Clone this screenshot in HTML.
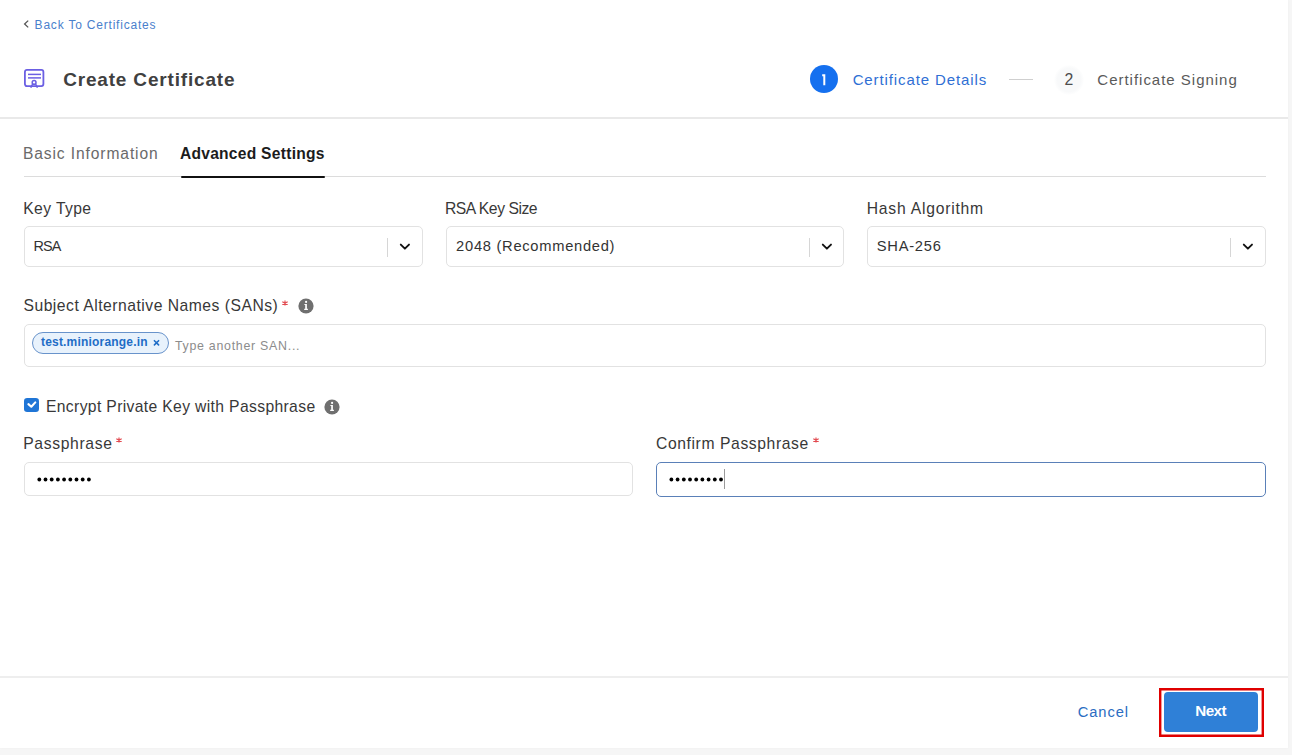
<!DOCTYPE html>
<html><head><meta charset="utf-8">
<style>
html,body{margin:0;padding:0;}
body{width:1292px;height:755px;overflow:hidden;background:#f6f6f6;position:relative;font-family:"Liberation Sans",sans-serif;}
.card{position:absolute;left:0;top:0;width:1288px;height:748px;background:#fff;box-shadow:0 0 3px rgba(0,0,0,0.035);}
.t{position:absolute;white-space:nowrap;line-height:1;}
.hr{position:absolute;height:1px;background:#e3e3e3;}
.box{position:absolute;box-sizing:border-box;border:1px solid #e2e2e2;border-radius:5px;background:#fff;}
.sep{position:absolute;width:1px;background:#d6d6d6;}
.chev{position:absolute;}
.info{position:absolute;width:15px;height:15px;border-radius:50%;background:#6e6e6e;}
.req{color:#e5484d;}
</style></head>
<body>
<div class="card">
  <!-- back link -->
  <svg class="chev" style="left:22px;top:19px" width="8" height="11" viewBox="0 0 8 11"><polyline points="6.2,1.6 2.6,5 6.2,8.4" fill="none" stroke="#555" stroke-width="1.3"/></svg>
  <div id="back" class="t" style="left:34.60px;top:19px;font-size:12px;letter-spacing:0.799px;color:#4a80cc;">Back To Certificates</div>

  <!-- header -->
  <svg style="position:absolute;left:23px;top:68px" width="23" height="23" viewBox="0 0 23 23">
    <rect x="1.9" y="1.9" width="18.5" height="16.2" rx="2" fill="none" stroke="#6b5fe3" stroke-width="1.8"/>
    <line x1="5" y1="6.4" x2="18" y2="6.4" stroke="#6b5fe3" stroke-width="1.5"/>
    <line x1="5" y1="9.9" x2="18" y2="9.9" stroke="#6b5fe3" stroke-width="1.5"/>
    <circle cx="11.1" cy="14.4" r="1.9" fill="none" stroke="#6b5fe3" stroke-width="1.5"/>
    <path d="M9.6 16 L7.8 19.8 M12.6 16 L14.4 19.8" fill="none" stroke="#6b5fe3" stroke-width="1.5"/>
  </svg>
  <div id="title" class="t" style="left:63.15px;top:70px;font-size:19px;font-weight:700;letter-spacing:0.825px;color:#404040;">Create Certificate</div>

  <!-- stepper -->
  <div style="position:absolute;left:810px;top:65px;width:28px;height:28px;border-radius:50%;background:#1570ef;"></div>
  <svg style="position:absolute;left:818px;top:72px" width="10" height="16" viewBox="0 0 10 16"><path d="M4.2 3.2 L6.3 3.2 L6.3 13.3" fill="none" stroke="#fff" stroke-width="2" stroke-linejoin="miter"/></svg>
  <div id="s1t" class="t" style="left:852.65px;top:72px;font-size:15px;letter-spacing:0.892px;color:#2f6fd4;">Certificate Details</div>
  <div class="hr" style="left:1009px;top:79px;width:24px;background:#cfcfcf;"></div>
  <div style="position:absolute;left:1053.5px;top:64.5px;width:30px;height:30px;border-radius:50%;background:radial-gradient(circle,#f8f9fa 55%,rgba(248,249,250,0) 72%);"></div>
  <div id="s2n" class="t" style="left:1064.6px;top:71.5px;font-size:15.8px;color:#4d4d4d;">2</div>
  <div id="s2t" class="t" style="left:1097.34px;top:72px;font-size:15px;letter-spacing:0.984px;color:#5a5a5a;">Certificate Signing</div>

  <div class="hr" style="left:0;top:117.4px;height:1.6px;width:1288px;background:#e9e9e9;"></div>

  <!-- tabs -->
  <div id="tab1" class="t" style="left:22.89px;top:146px;font-size:15.6px;letter-spacing:0.898px;color:#6a6a6a;">Basic Information</div>
  <div id="tab2" class="t" style="left:179.89px;top:146px;font-size:15.6px;font-weight:700;color:#1c1c1c;;letter-spacing:0.265px">Advanced Settings</div>
  <div class="hr" style="left:24px;top:176px;width:1242px;background:#dcdcdc;"></div>
  <div style="position:absolute;left:180.5px;top:175.6px;width:144px;height:2.3px;border-radius:1px;background:#111;"></div>

  <!-- row 1 labels -->
  <div id="lk" class="t" style="left:23.28px;top:201px;font-size:15.7px;letter-spacing:0.384px;color:#383838;">Key Type</div>
  <div id="lr" class="t" style="left:444.97px;top:201px;font-size:15.7px;letter-spacing:-0.462px;color:#383838;">RSA Key Size</div>
  <div id="lh" class="t" style="left:866.67px;top:201px;font-size:15.7px;letter-spacing:0.777px;color:#383838;">Hash Algorithm</div>

  <!-- selects -->
  <div class="box" style="left:24px;top:226px;width:399px;height:41px;"></div>
  <div id="v1" class="t" style="left:33.38px;top:239px;font-size:14.4px;color:#333;letter-spacing:-0.831px">RSA</div>
  <div class="sep" style="left:387px;top:238px;height:19px;"></div>
  <svg class="chev" style="left:398px;top:241px" width="13" height="10" viewBox="0 0 13 10"><polyline points="2.8,3.6 6.9,7.7 11,3.6" fill="none" stroke="#111" stroke-width="1.9" stroke-linecap="round" stroke-linejoin="round"/></svg>

  <div class="box" style="left:446px;top:226px;width:398px;height:41px;"></div>
  <div id="v2" class="t" style="left:456.12px;top:239px;font-size:14.7px;letter-spacing:0.719px;color:#333;">2048 (Recommended)</div>
  <div class="sep" style="left:809px;top:238px;height:19px;"></div>
  <svg class="chev" style="left:820px;top:241px" width="13" height="10" viewBox="0 0 13 10"><polyline points="2.8,3.6 6.9,7.7 11,3.6" fill="none" stroke="#111" stroke-width="1.9" stroke-linecap="round" stroke-linejoin="round"/></svg>

  <div class="box" style="left:867px;top:226px;width:399px;height:41px;"></div>
  <div id="v3" class="t" style="left:876.81px;top:239px;font-size:14.7px;letter-spacing:0.743px;color:#333;">SHA-256</div>
  <div class="sep" style="left:1230px;top:238px;height:19px;"></div>
  <svg class="chev" style="left:1241px;top:241px" width="13" height="10" viewBox="0 0 13 10"><polyline points="2.8,3.6 6.9,7.7 11,3.6" fill="none" stroke="#111" stroke-width="1.9" stroke-linecap="round" stroke-linejoin="round"/></svg>

  <!-- SANs -->
  <div id="ls" class="t" style="left:23.44px;top:298px;font-size:15.7px;letter-spacing:0.500px;color:#383838;">Subject Alternative Names (SANs)</div>
  <svg style="position:absolute;left:281px;top:299.5px" width="8" height="7" viewBox="0 0 8 7"><path d="M4 0.6 V5.6 M1.3 1.7 L6.7 4.5 M6.7 1.7 L1.3 4.5" stroke="#e2494f" stroke-width="1.15" fill="none"/></svg><svg style="position:absolute;left:298px;top:298.3px" width="16" height="16" viewBox="0 0 16 16"><circle cx="8" cy="8" r="7.6" fill="#6f6f6f"/><circle cx="8.1" cy="3.9" r="1.1" fill="#fff"/><path d="M6.4 5.9 H8.9 V10.8 H9.9 V12 H6.2 V10.8 H7.2 V7.1 H6.4 Z" fill="#fff"/></svg>
  <div class="box" style="left:24px;top:324px;width:1242px;height:43px;"></div>
  <div style="position:absolute;left:32px;top:332px;width:137px;height:22px;box-sizing:border-box;border:1px solid #6893cb;border-radius:11px;background:#e8f2fc;"></div>
  <div id="chip" class="t" style="left:41px;top:336px;font-size:12px;font-weight:700;letter-spacing:0.19px;color:#1f6dc6;">test.miniorange.in</div>
  <svg style="position:absolute;left:150px;top:337px" width="12" height="12" viewBox="0 0 12 12"><path d="M4.4 3.7 L8.6 7.9 M8.6 3.7 L4.4 7.9" stroke="#1f6dc6" stroke-width="1.6" stroke-linecap="round"/></svg>
  <div id="ph" class="t" style="left:174.95px;top:340px;font-size:12.4px;letter-spacing:0.722px;color:#8c8c8c;">Type another SAN...</div>

  <!-- checkbox -->
  <div style="position:absolute;left:24.2px;top:397.5px;width:14.8px;height:14.8px;border-radius:3.2px;background:#1f75d6;"></div>
  <svg style="position:absolute;left:24px;top:397.4px" width="15" height="15" viewBox="0 0 15 15"><polyline points="4.4,7.1 7.3,9.7 11.3,5.4" fill="none" stroke="#fff" stroke-width="2.1" stroke-linecap="round" stroke-linejoin="round"/></svg>
  <div id="le" class="t" style="left:45.97px;top:399px;font-size:15.7px;letter-spacing:0.351px;color:#383838;">Encrypt Private Key with Passphrase</div>
  <svg style="position:absolute;left:323.9px;top:398.7px" width="16" height="16" viewBox="0 0 16 16"><circle cx="8" cy="8" r="7.6" fill="#6f6f6f"/><circle cx="8.1" cy="3.9" r="1.1" fill="#fff"/><path d="M6.4 5.9 H8.9 V10.8 H9.9 V12 H6.2 V10.8 H7.2 V7.1 H6.4 Z" fill="#fff"/></svg>

  <!-- passphrase -->
  <div id="lp" class="t" style="left:23.24px;top:436px;font-size:15.7px;letter-spacing:0.645px;color:#383838;">Passphrase</div>
  <svg style="position:absolute;left:115px;top:436.8px" width="8" height="7" viewBox="0 0 8 7"><path d="M4 0.6 V5.6 M1.3 1.7 L6.7 4.5 M6.7 1.7 L1.3 4.5" stroke="#e2494f" stroke-width="1.15" fill="none"/></svg>
  <svg style="position:absolute;left:812px;top:436.8px" width="8" height="7" viewBox="0 0 8 7"><path d="M4 0.6 V5.6 M1.3 1.7 L6.7 4.5 M6.7 1.7 L1.3 4.5" stroke="#e2494f" stroke-width="1.15" fill="none"/></svg>
  <div id="lc" class="t" style="left:656.06px;top:436px;font-size:15.7px;letter-spacing:0.589px;color:#383838;">Confirm Passphrase</div>
  <div class="box" style="left:24px;top:462px;width:609px;height:34px;"></div>
  <div class="box" style="left:656px;top:462px;width:610px;height:35px;border-color:#5a80b8;"></div>
  <svg style="position:absolute;left:0;top:0;overflow:visible" width="1" height="1"><circle cx="39.30" cy="479.5" r="1.9" fill="#000"/><circle cx="45.50" cy="479.5" r="1.9" fill="#000"/><circle cx="51.70" cy="479.5" r="1.9" fill="#000"/><circle cx="57.90" cy="479.5" r="1.9" fill="#000"/><circle cx="64.10" cy="479.5" r="1.9" fill="#000"/><circle cx="70.30" cy="479.5" r="1.9" fill="#000"/><circle cx="76.50" cy="479.5" r="1.9" fill="#000"/><circle cx="82.70" cy="479.5" r="1.9" fill="#000"/><circle cx="88.90" cy="479.5" r="1.9" fill="#000"/></svg>
  <svg style="position:absolute;left:0;top:0;overflow:visible" width="1" height="1"><circle cx="671.40" cy="479.5" r="1.9" fill="#000"/><circle cx="677.60" cy="479.5" r="1.9" fill="#000"/><circle cx="683.80" cy="479.5" r="1.9" fill="#000"/><circle cx="690.00" cy="479.5" r="1.9" fill="#000"/><circle cx="696.20" cy="479.5" r="1.9" fill="#000"/><circle cx="702.40" cy="479.5" r="1.9" fill="#000"/><circle cx="708.60" cy="479.5" r="1.9" fill="#000"/><circle cx="714.80" cy="479.5" r="1.9" fill="#000"/><circle cx="721.00" cy="479.5" r="1.9" fill="#000"/></svg>
  <div style="position:absolute;left:723.5px;top:468.5px;width:1.4px;height:20px;background:#9a9a9a;"></div>

  <!-- footer -->
  <div class="hr" style="left:0;top:676px;height:2px;width:1288px;background:#eeeeee;"></div>
  <div id="cancel" class="t" style="left:1077.70px;top:705px;font-size:14.7px;letter-spacing:0.934px;color:#2b6dc2;">Cancel</div>
  <div style="position:absolute;left:1159px;top:688px;width:105px;height:49px;box-sizing:border-box;border:2px solid #df0000;box-shadow:inset 0 0 0 0.4px #df0000;"></div>
  <div style="position:absolute;left:1164px;top:692px;width:94px;height:40px;border-radius:4px;background:#2f80d7;"></div>
  <div id="next" class="t" style="left:1195.34px;top:703px;font-size:15.2px;font-weight:700;letter-spacing:-0.602px;color:#fff;">Next</div>
</div>
</body></html>
